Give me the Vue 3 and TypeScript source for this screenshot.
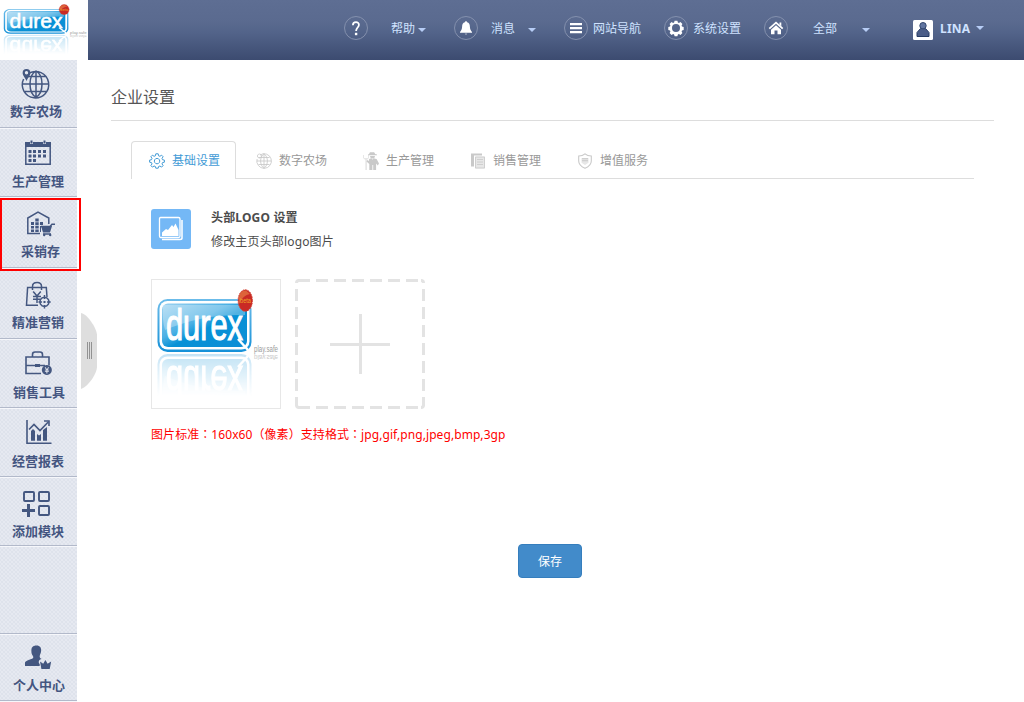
<script setup lang="ts">
interface Glyph {
  line?: string
  fill?: string
  width?: number
}
interface ModuleItem extends Glyph {
  label: string
  height: number
  pad: number
  shift?: number
  active?: boolean
}
interface TabItem extends Glyph {
  label: string
  soft?: string
}
interface NavItem extends Glyph {
  label: string
  kind: string
  caret?: boolean
}

const modules: ModuleItem[] = [
  {
    label: '数字农场', height: 68, pad: 0, shift: -2, width: 1.5,
    line: 'M29 13.2A13.2 13.2 0 1 1 23.6 19M36 10.8V37.2M22.8 24H49.2M25.5 16.5H46.5M25 31.5H47M36 10.8C28 15 28 33 36 37.2M36 10.8C44 15 44 33 36 37.2',
    fill: 'M26.5 9a3.9 3.9 0 0 1 3.9 3.9c0 2.8-3 5.4-3.9 8.1c-.9-2.7-3.9-5.3-3.9-8.1A3.9 3.9 0 0 1 26.5 9zm0 2.1a1.7 1.7 0 1 0 0 3.4a1.7 1.7 0 0 0 0-3.4z',
  },
  {
    label: '生产管理', height: 69, pad: 2, width: 1.5,
    line: 'M25.8 13V34.2H50.2V13',
    fill: 'M25 12H30V14H33V12H43V14H46V12H51V17H25zM30.5 10.5h2v3h-2zM43.5 10.5h2v3h-2zM33 20h3v3h-3zM38 20h3v3h-3zM43 20h3v3h-3zM28.5 20h3v3h-3zM28.5 24.5h3v3h-3zM33 24.5h3v3h-3zM38 24.5h3v3h-3zM43 24.5h3v3h-3zM28.5 29h3v3h-3zM33 29h3v3h-3z',
  },
  {
    label: '采销存', height: 71, pad: 3, shift: 9, active: true, width: 1.5,
    line: 'M40 33.5H27.8V18L38 12L48.8 18V24M41 26.5H50L52 24.2H55M43 34H51',
    fill: 'M31 22h3v3h-3zM31 26h3v2.5h-3zM31 29.5h3v2.5h-3zM35.3 18.5h3.4v3h-3.4zM35.3 22.3h3.4v3h-3.4zM35.3 26h3.4v2.5h-3.4zM35.3 29.5h3.4v2.5h-3.4zM40 22h3v3h-3zM40 26h1v6h-1zM41 26H52L50 32.5H43zM43 35a1.2 1.2 0 1 0 2.4 0a1.2 1.2 0 1 0-2.4 0M49 35a1.2 1.2 0 1 0 2.4 0a1.2 1.2 0 1 0-2.4 0',
  },
  {
    label: '精准营销', height: 71, pad: 3, width: 1.5,
    line: 'M38 34.2H26.5L27.6 16.5H46.3L47 26M32.5 19V15.5C32.5 10.3 41.5 10.3 41.5 15.5V19M33.2 20.5L37 25L40.8 20.5M33 25.5H41M33 28.3H41M37 25V32M44.5 26.3A4.6 4.6 0 1 1 44.4 26.3M44.5 24V28M44.5 34V37.5M38.5 30.9H42M47 30.9H50.7',
    fill: 'M43.5 30h2v2h-2z',
  },
  {
    label: '销售工具', height: 69, pad: 2, shift: 1, width: 1.6,
    line: 'M41 32.5H26V16H49V24.5M32.5 15.5V13.5Q32.5 11 35 11H40Q42.5 11 42.5 13.5V15.5M26 24.5H35M40 24.5H45',
    fill: 'M35 23h5v3h-5zM46.8 24a5 5 0 1 0 .1 0zM44.7 26.2h1l1.2 2l1.2-2h1l-1.4 2.5h1.2v.8h-1.5v.8h1.5v.8h-1.5v1.4h-1v-1.4h-1.5v-.8h1.5v-.8h-1.5v-.8h1.2z',
  },
  {
    label: '经营报表', height: 69, pad: 2, width: 1.6,
    line: 'M27 10V33.2H51.5M29 19.5L34 14.5L40 20.5L48 12.3M44 11H49V16',
    fill: 'M31 21l2-2l2 2v9.8h-4zM37 24l2 1.5l2-1.5v6.8h-4zM43 20l4-3v13.8h-4z',
  },
  {
    label: '添加模块', height: 69, pad: 3, width: 1.9,
    line: 'M25 12H33Q34 12 34 13V20Q34 21 33 21H25Q24 21 24 20V13Q24 12 25 12zM40 12H48Q49 12 49 13V20Q49 21 48 21H40Q39 21 39 20V13Q39 12 40 12zM40 26H48Q49 26 49 27V34Q49 35 48 35H40Q39 35 39 34V27Q39 26 40 26z',
    fill: 'M27 24h3v5h5v3h-5v5h-3v-5h-5v-3h5z',
  },
]
const profile: ModuleItem = {
  label: '个人中心', height: 67, pad: 0,
  fill: 'M36.5 11.5c3.6 0 5 2.3 4.6 5.8c-.3 2.4-1 3-1.4 4.6c-.2 1.5.5 2.4 2 3c-3 .2-3.7 3.6-2 5.2V32H25v-3.2c0-1.3 3-2.8 7-4.1c1.4-.5 1.5-1.3 1-2.8c-1.1-1.1-1.6-2.4-1.6-4.6c-.3-3.7 1.4-5.8 5.1-5.8zM40 27.5l3.2 2.2l2.2-3.7l2.2 3.7l3.6-2.2l-1.5 7.5H41.4z',
}

const nav: NavItem[] = [
  { label: '帮助', kind: 'help', caret: true, line: 'M8.9 9.2C8.9 5 15.2 5.2 14.9 9C14.7 11.4 12.1 11.8 12.1 15', width: 1.8, fill: 'M10.9 16.8h2.4v2.4h-2.4z' },
  { label: '消息', kind: 'message', caret: true, fill: 'M12 5.3c.7 0 1 .4 1.1 1c2 .5 2.7 2.2 2.8 4.4c.1 2.2.6 3.4 2.1 5.3v.8H6V16c1.5-1.9 2-3.1 2.1-5.3c.1-2.2.8-3.9 2.8-4.4c.1-.6.4-1 1.1-1zM10.7 17.7h2.6q-1.3 1.5-2.6 0z' },
  { label: '网站导航', kind: 'map', fill: 'M6 7h12v2.2H6zM6 11h12v2.2H6zM6 15h12v2.2H6z' },
  { label: '系统设置', kind: 'system', fill: 'M10.6 4.8h2.8l.5 1.7l1 .4l1.6-.8l1.9 1.9l-.8 1.6l.4 1l1.7.5v2.8l-1.7.5l-.4 1l.8 1.6l-1.9 1.9l-1.6-.8l-1 .4l-.5 1.7h-2.8l-.5-1.7l-1-.4l-1.6.8L5.6 17l.8-1.6l-.4-1l-1.7-.5v-2.8l1.7-.5l.4-1L5.6 8l1.9-1.9l1.6.8l1-.4zM12 8.1a4 4 0 1 0 0 8a4 4 0 0 0 0-8z' },
  { label: '全部', kind: 'home', caret: true, width: 1.8, line: 'M5.3 12.6L12 6.6L18.7 12.6', fill: 'M12 9.3L17 13.8V18.3H13.5V14.5H10.5V18.3H7V13.8zM15.5 6.5h1.8v4l-1.8-1.7z' },
]

const tabs: TabItem[] = [
  { label: '基础设置', line: 'M6.8.8h2.4l.4 2l1.3.5l1.7-1.1l1.5 1.5l-1.1 1.7l.5 1.3l1.9.4v2.1l-1.9.4l-.5 1.3l1.1 1.7l-1.5 1.5l-1.7-1.1l-1.3.5l-.4 1.7H6.8l-.4-1.7l-1.3-.5l-1.7 1.1l-1.5-1.5L3 10.9l-.5-1.3l-1.9-.4V7.1l1.9-.4L3 5.4L1.9 3.7l1.5-1.5l1.7 1.1l1.3-.5zM8 5.4a2.7 2.7 0 1 0 .1 0z', width: 1 },
  { label: '数字农场', line: 'M4 2A7.3 7.3 0 1 1 1.1 6M8 .7V15.3M.7 8H15.3M2.5 4.5H13.5M2.5 11.5H13.5M8 .7C3.5 4 3.5 12 8 15.3M8 .7C12.5 4 12.5 12 8 15.3M3.4 1a2 2 0 1 0 .1 0', width: 0.85 },
  { label: '生产管理', soft: 'M0 2h1v3h4V2h1v3L4 7v10H2.3V7L0 5z', fill: 'M6.5-.3l1.5-.7l1 .4l1-.4l1.7.7l.3 1.3l2 .6v.6H5V1.6l1.2-.6zM7 3h5l-.8 2.5H7.8zM6 6l2-.6l1.5 1l1.5-1l2.6.7l2.4 4.4l-1.2 2l-1.7-2V17H10.2v-5h-.8v5H6.3v-6L3.5 8.5l.8-1.5L6 8z' },
  { label: '销售管理', fill: 'M1 .5H12V2.5H4V13.5H1z', soft: 'M5 3.5H15V15.5H5z', line: 'M5.5 4H14.5V15H5.5zM7 6.5H13M7 9H13M7 11.5H13', width: 0.8 },
  { label: '增值服务', line: 'M8 .8Q10.5 3 14.3 3V8C14.3 12 11 14 8 15.3C5 14 1.7 12 1.7 8V3Q5.5 3 8 .8z', soft: 'M4.5 5h7v4.8L8 12L4.5 9.8z', fill: 'M5 5.2h6v1H5zM5 7.2h6v1H5z' },
]
</script>

<template>
  <div class="page">
    <svg class="defs" width="0" height="0" aria-hidden="true">
      <defs>
        <linearGradient id="badge-blue" x1="0" y1="0" x2="1" y2="1">
          <stop offset="0" stop-color="#9ed3f1" /><stop offset=".4" stop-color="#4bb0e4" />
          <stop offset=".55" stop-color="#0791d6" /><stop offset="1" stop-color="#0d8ed6" />
        </linearGradient>
        <linearGradient id="badge-edge" x1="0" y1="0" x2="0" y2="1">
          <stop offset="0" stop-color="#6cbcea" /><stop offset="1" stop-color="#1591d8" />
        </linearGradient>
        <linearGradient id="badge-fade" x1="0" y1="0" x2="0" y2="1">
          <stop offset="0" stop-color="#fff" stop-opacity="0" /><stop offset=".2" stop-color="#fff" stop-opacity="0" />
          <stop offset="1" stop-color="#fff" stop-opacity=".26" />
        </linearGradient>
        <mask id="fade-mask" maskUnits="userSpaceOnUse" x="0" y="19" width="128" height="54">
          <rect x="0" y="19" width="128" height="54" fill="url(#badge-fade)" />
        </mask>
        <g id="badge">
          <rect x="5.5" y="19" width="94" height="53" rx="10" fill="url(#badge-edge)" />
          <rect x="7.5" y="21" width="90" height="48.5" rx="8" fill="#fff" />
          <rect x="10" y="23.5" width="85" height="43.5" rx="6" fill="url(#badge-blue)" />
          <path d="M11 25H93V35Q50 34 13 50Q10 40 11 25z" fill="#fff" opacity=".3" />
          <path d="M86 59L96 70" stroke="#fff" stroke-width="2.5" />
          <text x="14" y="60" font-size="45" font-family="Liberation Sans, Arial, sans-serif" fill="#fff" stroke="#fff" stroke-width="1.2" textLength="77" lengthAdjust="spacingAndGlyphs">durex</text>
        </g>
        <symbol id="brand" viewBox="0 0 128 128" preserveAspectRatio="none">
          <use href="#badge" />
          <g transform="translate(0 146) scale(1 -1)" mask="url(#fade-mask)"><use href="#badge" /></g>
          <ellipse cx="93.3" cy="20.5" rx="7.2" ry="10.8" fill="#c92a25" stroke="#d54a3a" stroke-dasharray="1.5 1" />
          <path d="M87 17Q88 10 94 10.5L98 14Q91 15 87 24z" fill="#e67c43" opacity=".7" />
          <text x="88" y="23" font-size="8" font-family="Liberation Sans, Arial, sans-serif" fill="#efa528" textLength="11" lengthAdjust="spacingAndGlyphs">beta</text>
          <text x="102" y="72" font-size="9" font-family="Liberation Sans, Arial, sans-serif" fill="#9b9b9b" textLength="24" lengthAdjust="spacingAndGlyphs">play.safe</text>
          <text x="102" y="-75" transform="scale(1 -1)" font-size="8" font-family="Liberation Sans, Arial, sans-serif" fill="#c9c9c9" textLength="24" lengthAdjust="spacingAndGlyphs">play.safe</text>
        </symbol>
      </defs>
    </svg>

    <header class="topbar">
      <a class="brand"><svg width="88" height="60"><use href="#brand" width="88" height="60" /></svg></a>
      <nav class="nav">
        <a v-for="item in nav" :key="item.kind" class="nav-item" :class="item.kind">
          <svg class="ring" width="24" height="24" viewBox="0 0 24 24">
            <circle cx="12" cy="12" r="11.5" fill="none" stroke="#8490ad" />
            <path v-if="item.line" :d="item.line" fill="none" stroke="#fff" :stroke-width="item.width" />
            <path :d="item.fill" fill="#fff" fill-rule="evenodd" />
          </svg>
          <span class="nav-label">{{ item.label }}</span>
          <i v-if="item.caret" class="caret" />
        </a>
        <a class="nav-item user">
          <svg class="avatar" width="20" height="20" viewBox="0 0 20 20">
            <rect width="20" height="20" rx="1.5" fill="#fff" />
            <path d="M7.5 8.5L4 12.5V16.5H16V12.5L12.5 8.5z" fill="#4b5d87" stroke="#263b63" stroke-linejoin="round" />
            <circle cx="10" cy="5.7" r="3.2" fill="#6175a0" stroke="#354970" />
          </svg>
          <span class="nav-label">LINA</span>
          <i class="caret" />
        </a>
      </nav>
    </header>

    <div class="body">
      <aside class="sidebar">
        <a v-for="m in modules" :key="m.label" class="module" :class="{ active: m.active }" :style="{ height: m.height + 'px', paddingTop: m.pad + 'px' }">
          <svg width="77" height="41" viewBox="0 0 77 41">
            <path :d="m.line" fill="none" stroke="#445780" :stroke-width="m.width" />
            <path :d="m.fill" fill="#445780" fill-rule="evenodd" />
          </svg>
          <span class="module-label" :style="{ marginLeft: 12 + (m.shift ?? 0) + 'px' }">{{ m.label }}</span>
        </a>
        <div class="spacer" />
        <a class="module" :style="{ height: profile.height + 'px' }">
          <svg width="77" height="41" viewBox="0 0 77 41"><path :d="profile.fill" fill="#445780" /></svg>
          <span class="module-label person">{{ profile.label }}</span>
        </a>
        <svg class="handle" width="16" height="76" viewBox="0 0 16 76">
          <path d="M0 0C8 2 16 17 16 22V54C16 60 8 73 0 76z" fill="#dedede" />
          <path d="M6.5 29V46M8.5 29V46M10.5 29V46" stroke="#929292" />
        </svg>
      </aside>

      <main class="content">
        <h1 class="title">企业设置</h1>
        <div class="tabs">
          <a v-for="(t, i) in tabs" :key="t.label" class="tab" :class="{ current: i === 0 }">
            <svg class="tab-icon" width="16" height="16" viewBox="0 0 16 16">
              <path v-if="t.soft" :d="t.soft" fill="currentColor" opacity=".45" />
              <path v-if="t.fill" :d="t.fill" fill="currentColor" />
              <path v-if="t.line" :d="t.line" fill="none" stroke="currentColor" :stroke-width="t.width ?? 1.1" />
            </svg>
            <span>{{ t.label }}</span>
          </a>
        </div>
        <section class="panel">
          <div class="intro">
            <svg width="40" height="40" viewBox="0 0 40 40">
              <rect width="40" height="40" rx="3" fill="#74b8f6" />
              <path d="M9.5 8.5H27.5Q29 8.5 29 10V27Q29 28.5 27.5 28.5H9.5Q8.5 28.5 8.5 27V10Q8.5 8.5 9.5 8.5z" fill="none" stroke="#fff" stroke-width="1.3" />
              <path d="M31 11V29Q31 30.5 29 30.5H11" fill="none" stroke="#fff" stroke-width="1.5" />
              <path d="M11 27V23.5L15 20L17 21L21 16L22.5 18L24.5 14.5L27.5 21V27z" fill="#fff" />
            </svg>
            <div class="intro-text">
              <strong>头部LOGO 设置</strong>
              <span>修改主页头部logo图片</span>
            </div>
          </div>
          <div class="pictures">
            <div class="picture"><svg width="128" height="128"><use href="#brand" width="128" height="128" /></svg></div>
            <svg class="add" width="130" height="130" viewBox="0 0 130 130" fill="none" stroke="#e3e3e3" stroke-width="3">
              <path d="M3 1.5H127M3 128.5H127" stroke-dasharray="12 6" />
              <path d="M1.5 10V127M128.5 10V127" stroke-dasharray="12 6" />
              <path d="M1.5 4Q1.5 1.5 4 1.5M126 1.5Q128.5 1.5 128.5 4M128.5 126Q128.5 128.5 126 128.5M4 128.5Q1.5 128.5 1.5 126" />
              <path d="M35 65.5H95M65.5 35V95" />
            </svg>
          </div>
          <p class="hint">图片标准<span class="mark">：</span>160x60<span class="mark">（</span>像素<span class="mark">）</span>支持格式<span class="mark">：</span>jpg,gif,png,jpeg,bmp,3gp</p>
          <button class="save" type="button">保存</button>
        </section>
      </main>
    </div>
  </div>
</template>

<style>
body { background: #fff; }
</style>

<style scoped>
* { box-sizing: border-box; }
.page { width: 1024px; height: 702px; overflow: hidden; font: 12px/20px "Noto Sans", "Noto Sans CJK SC", sans-serif; color: #4c4c4c; background: #fff; }
.page svg { display: block; flex: none; }
.page .defs { height: 0; }
.topbar { display: flex; height: 60px; }
.brand { width: 88px; }
.nav { display: flex; flex: 1; align-items: flex-start; padding: 16px 0 0 256px; background: linear-gradient(#5e6e93 0, #5a6a8f 22px, #53648a 32px, #3c4b70 60px); }
.nav-item { display: flex; align-items: center; height: 24px; width: 110px; color: #cfe2ff; }
.nav-label { padding-top: 2px; white-space: nowrap; }
.caret { width: 0; height: 0; margin-top: 4px; border: 4px solid transparent; border-top-color: #b7cdf6; border-bottom: 0; }
.help .nav-label { margin: 0 3px 0 23px; }
.message .nav-label { margin: 0 13px; }
.map, .system { width: 100px; }
.map .nav-label, .system .nav-label { margin-left: 5px; }
.home { width: 149px; }
.home .nav-label { margin: 0 25px; }
.avatar { margin-top: 4px; }
.user .nav-label { margin: 0 6px 0 7px; padding-top: 1px; font-weight: 700; letter-spacing: 0.2px; }
.user .caret { margin-top: 0; }
.body { display: flex; height: 642px; }
.sidebar { position: relative; flex: none; width: 77px; height: 641px; background-color: #e6e9f1; background-image: radial-gradient(circle, #dadfe9 0 0.6px, transparent 0.9px), radial-gradient(circle, #dadfe9 0 0.6px, transparent 0.9px); background-size: 4px 4px; background-position: 0 0, 2px 2px; }
.module { position: relative; display: block; border-bottom: 1px solid #b2b9ca; box-shadow: 0 1px 0 #f6f7fb; }
.module-label { display: block; height: 20px; color: #445580; font-size: 13px; font-weight: 700; white-space: nowrap; }
.person { margin-left: 13px; }
.active::after { content: ""; box-sizing: border-box; position: absolute; z-index: 1; left: 0; top: 1px; width: 81px; height: 73px; border: 2px solid #f00; }
.spacer { height: 88px; border-bottom: 1px solid #b2b9ca; box-shadow: 0 1px 0 #f6f7fb; }
.handle { position: absolute; left: 81px; top: 253px; }
.content { flex: 1; padding: 0 30px 0 34px; }
.title { height: 61px; margin: 0; padding-top: 25px; border-bottom: 1px solid #ddd; color: #555; font-size: 16px; font-weight: 400; line-height: 24px; }
.tabs { display: flex; gap: 2px; height: 38px; margin: 20px 20px 0; border-bottom: 1px solid #ddd; }
.tab { display: flex; align-items: center; gap: 7px; width: 105px; height: 38px; padding-left: 17px; border: 1px solid transparent; border-bottom: 0; color: #999; white-space: nowrap; }
.tab-icon { color: #c9c9c9; overflow: visible; }
.current { border-color: #ddd; border-radius: 4px 4px 0 0; background: #fff; color: #439bd6; }
.current .tab-icon { color: #439bd6; }
.panel { display: flex; flex-direction: column; padding: 30px 40px 0; }
.intro { display: flex; gap: 20px; height: 70px; }
.intro-text { display: flex; flex-direction: column; gap: 4px; margin-top: -1px; letter-spacing: 0.16px; }
.pictures { display: flex; gap: 14px; }
.picture { width: 130px; height: 130px; border: 1px solid #e7e7e7; }
.hint { margin: 16px 0 0; color: #f00; line-height: 20px; letter-spacing: 0.07px; white-space: nowrap; }
.mark { font-family: "Noto Sans CJK TC", sans-serif; line-height: 1; }
.save { align-self: flex-start; width: 64px; height: 34px; margin: 99px 0 0 367px; padding: 2px 0 0; border: 1px solid #357ebd; border-radius: 4px; background: #428bca; color: #fff; font: inherit; }
</style>
